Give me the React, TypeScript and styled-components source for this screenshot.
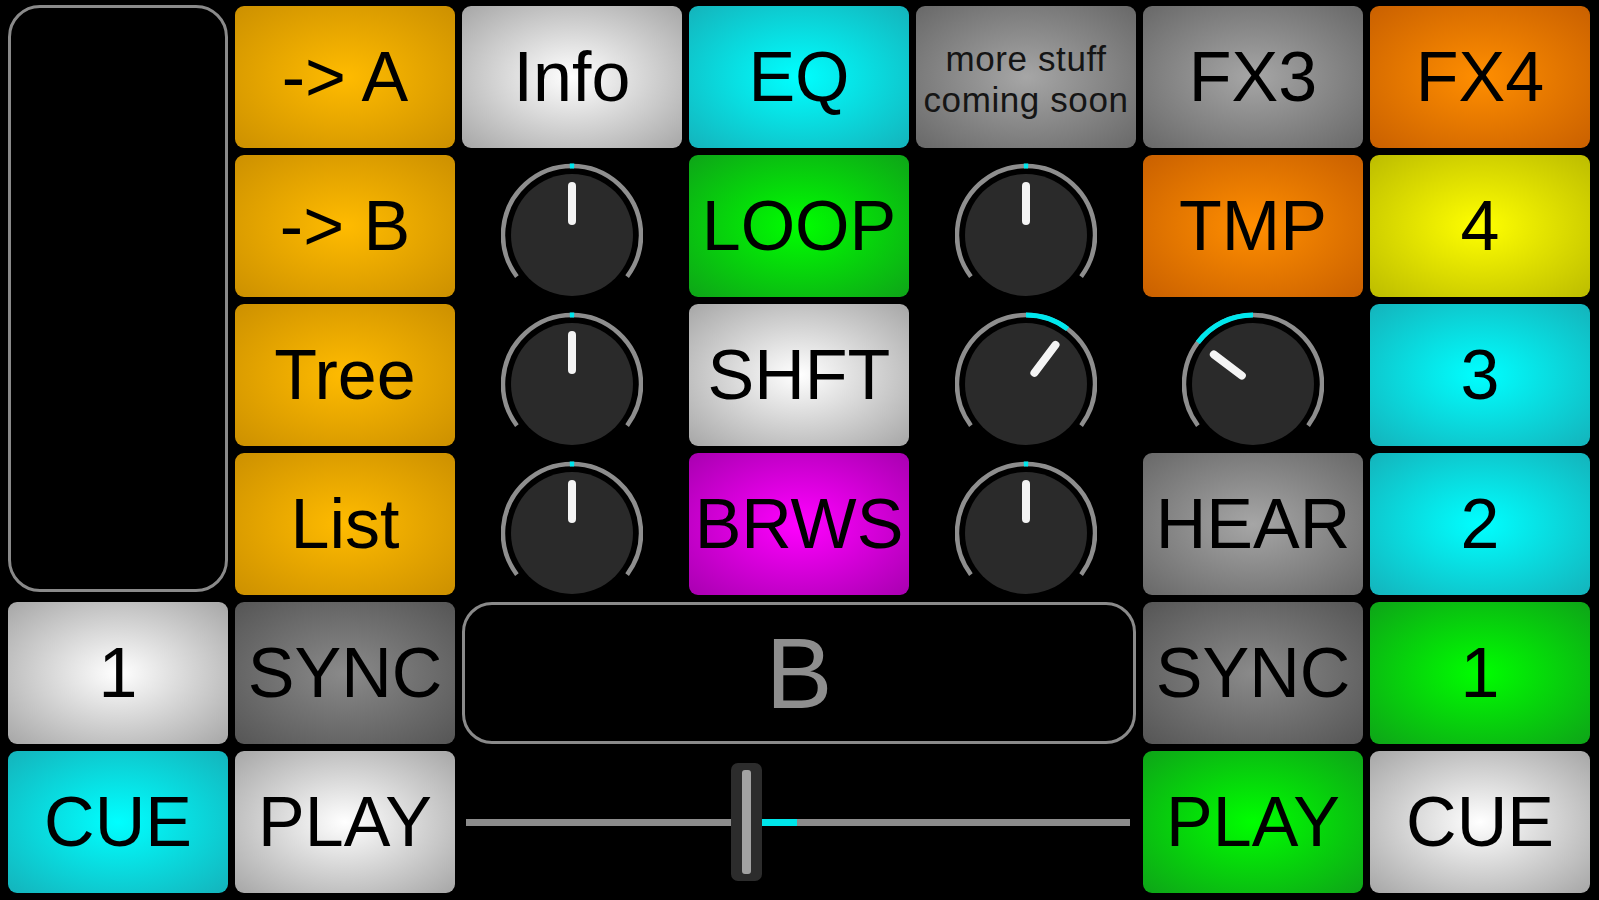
import React from "react";
import styled, { createGlobalStyle } from "styled-components";

const GlobalStyle = createGlobalStyle`
  html, body { margin: 0; padding: 0; background: #000; }
  #root { width: 1599px; height: 900px; }
  * { box-sizing: border-box; }
`;

const palette: Record<string, [string, string]> = {
  gold: ["#ffbb00", "#cc9000"],
  white: ["#ffffff", "#a6a6a6"],
  cyan: ["#00ffff", "#14b3bb"],
  gray: ["#a6a6a6", "#686868"],
  dark: ["#8a8a8a", "#555555"],
  orange: ["#ff8e00", "#c96000"],
  green: ["#00ff00", "#0ea418"],
  yellow: ["#ffff00", "#bcbc00"],
  magenta: ["#ff00ff", "#a800b0"],
};

const Board = styled.div`
  width: 1599px;
  height: 900px;
  background: #000;
  padding: 6px 9px 7px 8px;
  display: grid;
  grid-template-columns: repeat(7, 1fr);
  grid-template-rows: repeat(6, 1fr);
  gap: 7px;
  font-family: "Liberation Sans", Arial, sans-serif;
`;

const TouchPanel = styled.div`
  grid-row: span 4;
  border: 3px solid #8a8a8a;
  border-radius: 32px;
  margin: -1px 0 3px 0;
  background: #000;
`;

const Pad = styled.div<{ $tone: string }>`
  display: flex;
  align-items: center;
  justify-content: center;
  border-radius: 9px;
  background: radial-gradient(
    ellipse at center,
    ${(p) => palette[p.$tone][0]} 0%,
    ${(p) => palette[p.$tone][1]} 100%
  );
  color: #000;
  font-size: 70px;
  line-height: 1;
  white-space: nowrap;
  text-align: center;
`;

const SmallLabel = styled.span`
  font-size: 35px;
  line-height: 41px;
  letter-spacing: 0.6px;
  color: #151515;
  white-space: normal;
  padding-top: 4px;
`;

const KnobCell = styled.div`
  display: flex;
  align-items: flex-end;
  justify-content: center;
`;

const Display = styled.div`
  grid-column: span 3;
  border: 3px solid #8a8a8a;
  border-radius: 30px;
  display: flex;
  align-items: center;
  justify-content: center;
  color: #8e8e8e;
  font-size: 100px;
  line-height: 1;
`;

const SliderCell = styled.div`
  grid-column: span 3;
  display: flex;
  align-items: center;
  padding: 0 6px 0 4px;
`;

const Track = styled.div<{ $grow?: boolean }>`
  height: 7px;
  background: #8c8c8c;
  flex: ${(p) => (p.$grow ? "1 1 auto" : "0 0 auto")};
`;

const ValueBar = styled.div`
  height: 7px;
  width: 35px;
  background: #00e6ea;
  flex: 0 0 auto;
`;

const Handle = styled.div`
  width: 31px;
  height: 118px;
  border-radius: 7px;
  background: #2c2c2c;
  display: flex;
  justify-content: center;
  align-items: center;
  flex: 0 0 auto;
`;

const HandleLine = styled.div`
  width: 9px;
  height: 104px;
  border-radius: 3px;
  background: #a2a2a2;
`;

const rad = (d: number) => (d * Math.PI) / 180;
const CX = 71;
const CY = 80;
const pt = (deg: number, r: number) =>
  `${(CX + r * Math.sin(rad(deg))).toFixed(2)} ${(CY - r * Math.cos(rad(deg))).toFixed(2)}`;
const arc = (a: number, b: number, r: number) =>
  `M ${pt(a, r)} A ${r} ${r} 0 ${b - a > 180 ? 1 : 0} 1 ${pt(b, r)}`;

function Knob({ angle }: { angle: number }) {
  const lo = angle === 0 ? -1.8 : Math.min(0, angle);
  const hi = angle === 0 ? 1.8 : Math.max(0, angle);
  return (
    <KnobCell>
      <svg width="142" height="142" viewBox="0 0 142 142">
        <circle cx={CX} cy={CY} r={61} fill="#2a2a2a" />
        <path d={arc(-127, 127, 69)} stroke="#8e8e8e" strokeWidth={4.5} fill="none" />
        <path d={arc(lo, hi, 69)} stroke="#00e8ee" strokeWidth={5} fill="none" />
        <line
          x1={pt(angle, 14).split(" ")[0]}
          y1={pt(angle, 14).split(" ")[1]}
          x2={pt(angle, 49).split(" ")[0]}
          y2={pt(angle, 49).split(" ")[1]}
          stroke="#f4f4f4"
          strokeWidth={8}
          strokeLinecap="round"
        />
      </svg>
    </KnobCell>
  );
}

function Crossfader({ pos }: { pos: number }) {
  return (
    <SliderCell>
      <Track style={{ width: pos }} />
      <Handle>
        <HandleLine />
      </Handle>
      <ValueBar />
      <Track $grow />
    </SliderCell>
  );
}

export default function App() {
  return (
    <>
      <GlobalStyle />
      <Board>
        <TouchPanel />
        <Pad $tone="gold">-&gt; A</Pad>
        <Pad $tone="white">Info</Pad>
        <Pad $tone="cyan">EQ</Pad>
        <Pad $tone="gray">
          <SmallLabel>
            more stuff
            <br />
            coming soon
          </SmallLabel>
        </Pad>
        <Pad $tone="gray">FX3</Pad>
        <Pad $tone="orange">FX4</Pad>

        <Pad $tone="gold">-&gt; B</Pad>
        <Knob angle={0} />
        <Pad $tone="green">LOOP</Pad>
        <Knob angle={0} />
        <Pad $tone="orange">TMP</Pad>
        <Pad $tone="yellow">4</Pad>

        <Pad $tone="gold">Tree</Pad>
        <Knob angle={0} />
        <Pad $tone="white">SHFT</Pad>
        <Knob angle={37} />
        <Knob angle={-53} />
        <Pad $tone="cyan">3</Pad>

        <Pad $tone="gold">List</Pad>
        <Knob angle={0} />
        <Pad $tone="magenta">BRWS</Pad>
        <Knob angle={0} />
        <Pad $tone="gray">HEAR</Pad>
        <Pad $tone="cyan">2</Pad>

        <Pad $tone="white">1</Pad>
        <Pad $tone="dark">SYNC</Pad>
        <Display>B</Display>
        <Pad $tone="dark">SYNC</Pad>
        <Pad $tone="green">1</Pad>

        <Pad $tone="cyan">CUE</Pad>
        <Pad $tone="white">PLAY</Pad>
        <Crossfader pos={265} />
        <Pad $tone="green">PLAY</Pad>
        <Pad $tone="white">CUE</Pad>
      </Board>
    </>
  );
}
